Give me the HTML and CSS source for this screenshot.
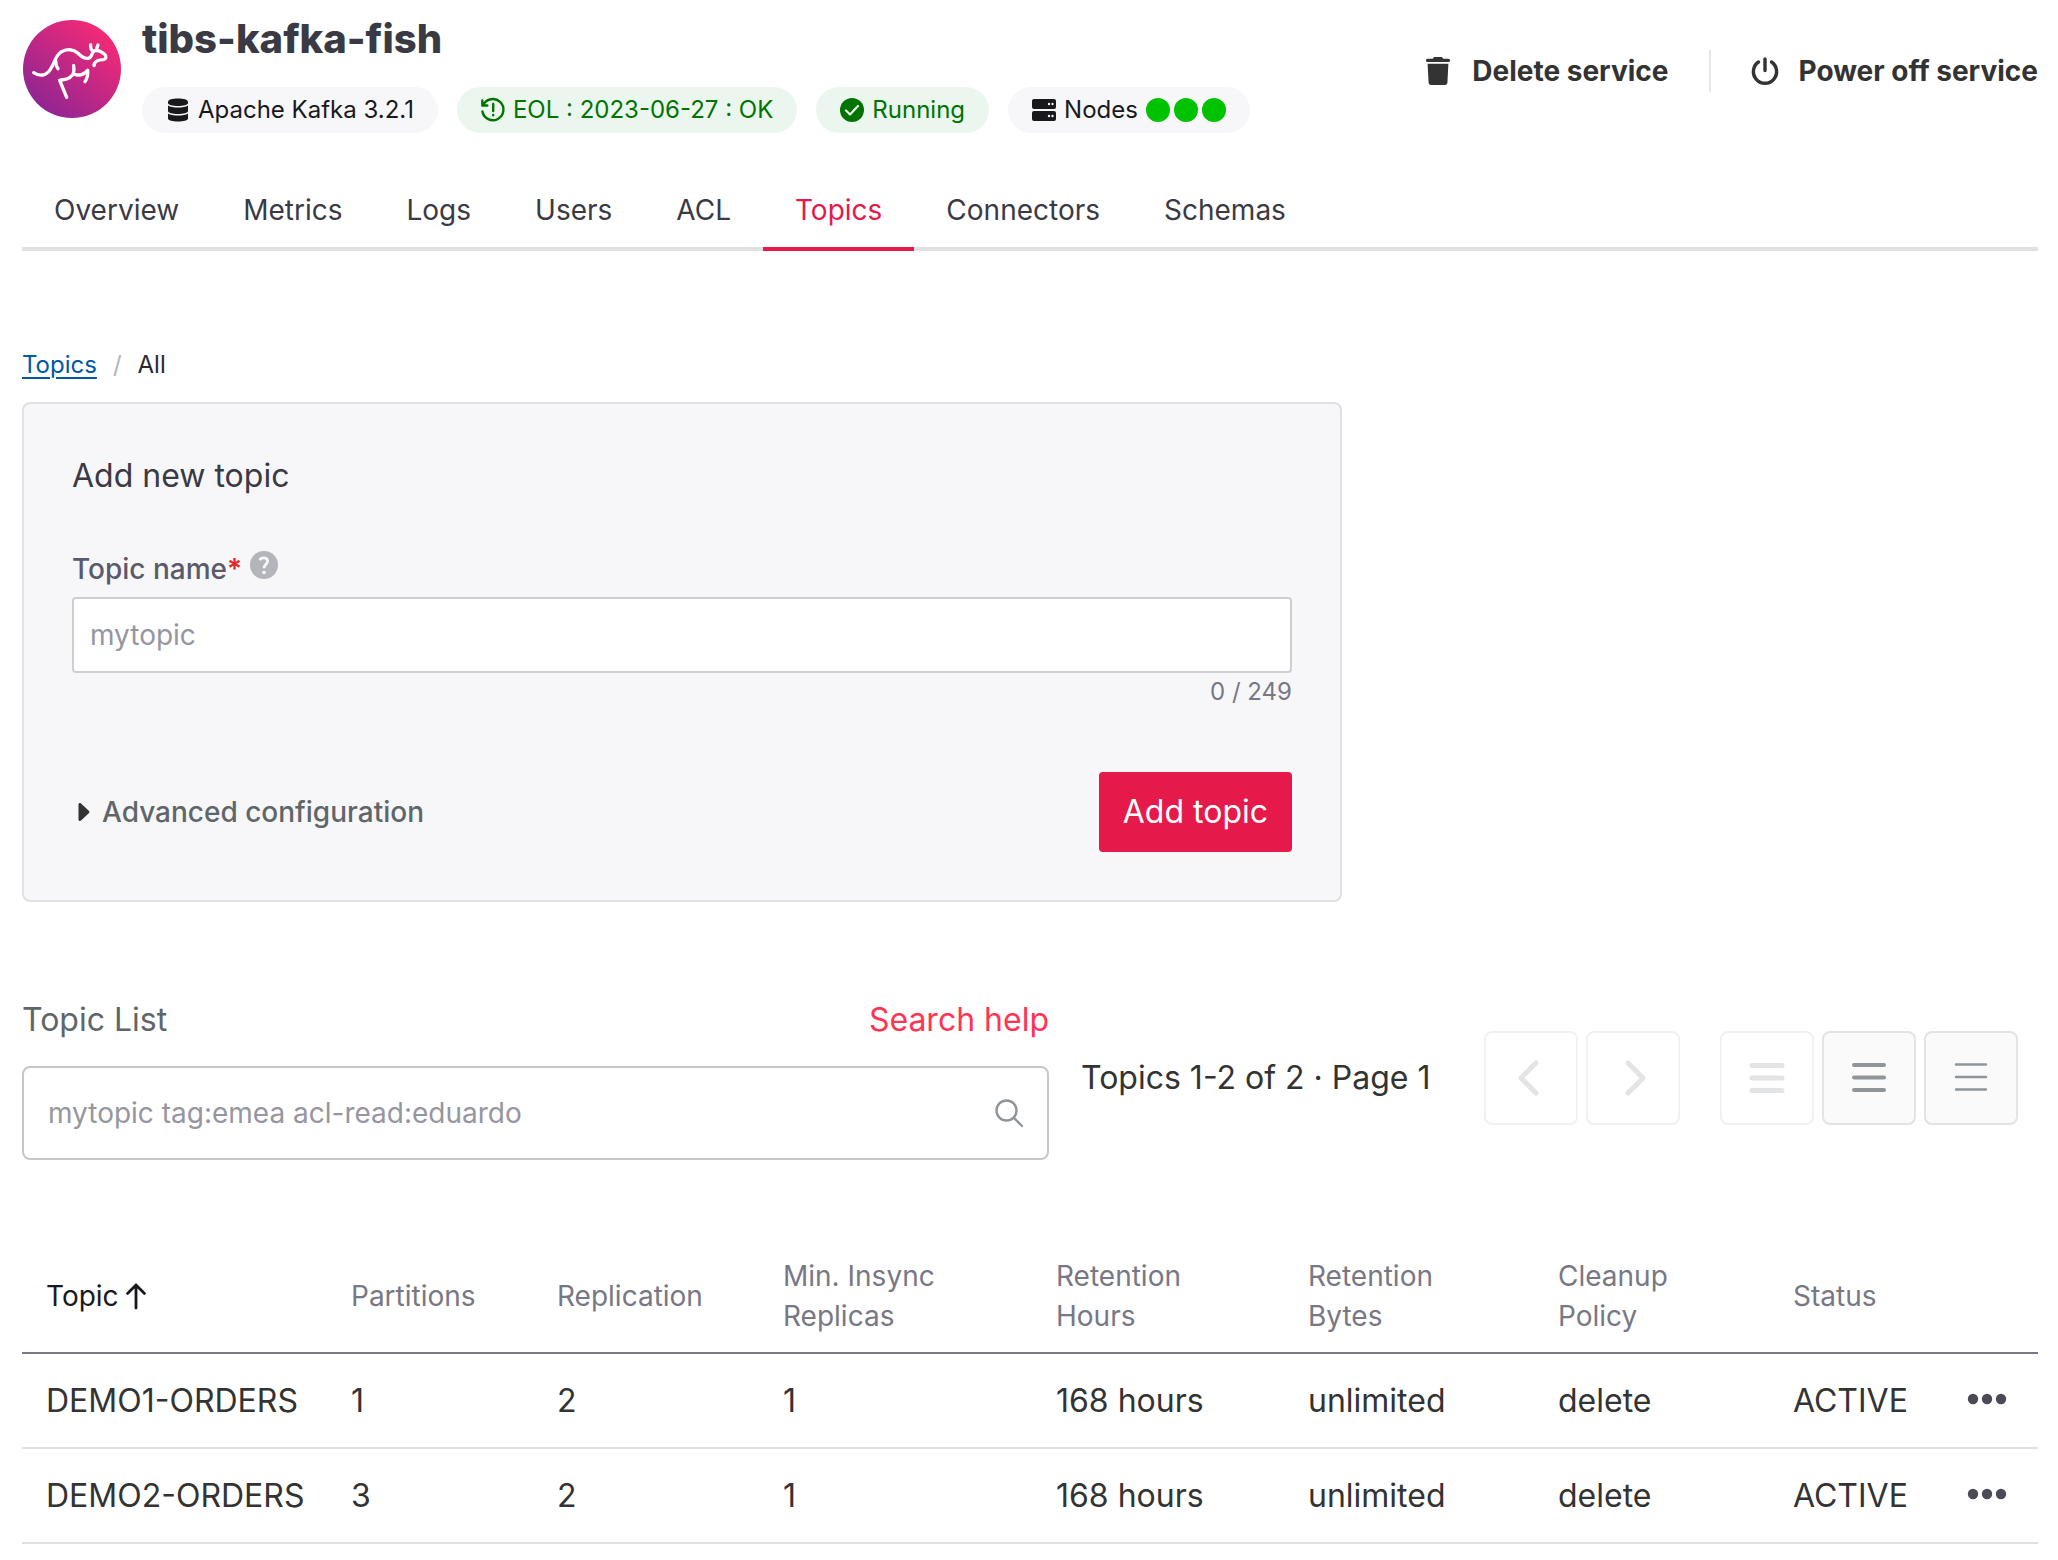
FILE: index.html
```html
<!DOCTYPE html>
<html lang="en">
<head>
<meta charset="utf-8">
<meta name="viewport" content="width=device-width, initial-scale=1">
<title>tibs-kafka-fish – Topics</title>
<link rel="stylesheet" href="styles.css">
</head>
<body>
<header class="service">
  <svg class="service-logo" viewBox="0 0 294 294" aria-hidden="true">
    <defs><linearGradient id="logo-fill" x1="0.15" y1="0.9" x2="0.85" y2="0.1"><stop offset="0" stop-color="#8e2593"/><stop offset="1" stop-color="#f62a75"/></linearGradient></defs>
    <circle cx="147" cy="147" r="147" fill="url(#logo-fill)"/>
    <g fill="none" stroke="#fff" stroke-width="10" stroke-linecap="round" stroke-linejoin="round">
      <path d="M32 158C50 170 69 168 82 148C96 128 95 110 114 96C132 85 152 88 164 99C176 111 185 117 196 115C209 112 204 100 213 93C228 87 236 97 245 103C252 109 249 118 241 119C228 119 214 124 213 137"/>
      <path d="M203 75C202 83 204 90 211 94M225 75C223 81 220 85 221 90"/>
      <path d="M98 122C98 132 100 139 105 146"/>
      <path d="M152 137C155 158 151 165 140 173C129 181 120 178 110 181L131 232"/>
      <path d="M152 162C166 168 182 164 194 151C195 164 193 175 186 185"/>
    </g>
  </svg>
  <div class="service-info">
    <h1 class="service-name">tibs-kafka-fish</h1>
    <ul class="chips">
      <li class="chip">
        <svg class="chip-icon" viewBox="0 0 20 24" fill="currentColor" aria-hidden="true"><path d="M0 4C0 1.600 4.500.5 10 .5S20 1.600 20 4V5C20 7 15.500 8 10 8S0 7 0 5Z"/><path d="M0 7.500C2 9 6 9.600 10 9.600S18 9 20 7.500V13C20 15 15.500 16 10 16S0 15 0 13Z"/><path d="M0 15.500C2 17 6 17.600 10 17.600S18 17 20 15.500V20.500C20 22.500 15.500 23.500 10 23.500S0 22.500 0 20.500Z"/></svg>
        Apache Kafka 3.2.1
      </li>
      <li class="chip chip-ok">
        <svg class="chip-icon" viewBox="0 0 24 24" fill="none" stroke="currentColor" stroke-width="2.400" stroke-linecap="round" stroke-linejoin="round" aria-hidden="true"><path d="M1.300 2.500V7.500H6.300M2.200 7.200A10.600 10.600 0 1 1 1.400 13.500"/><path d="M12.200 6V13M12.200 17V17.200"/></svg>
        EOL : 2023-06-27 : OK
      </li>
      <li class="chip chip-ok">
        <svg class="chip-icon" viewBox="0 0 24 24" aria-hidden="true"><circle cx="12" cy="12" r="12" fill="currentColor"/><path d="M6 12.500L10 16.500L18 8" fill="none" stroke="#ebf7ee" stroke-width="2.200" stroke-linecap="round" stroke-linejoin="round"/></svg>
        Running
      </li>
      <li class="chip">
        <svg class="chip-icon" viewBox="0 0 24 24" aria-hidden="true"><rect y="1" width="24" height="10" rx="2" fill="currentColor"/><rect y="13" width="24" height="10" rx="2" fill="currentColor"/><g fill="#f7f7fa"><circle cx="17" cy="6" r="1.200"/><circle cx="20.500" cy="6" r="1.200"/><circle cx="17" cy="18" r="1.200"/><circle cx="20.500" cy="18" r="1.200"/></g></svg>
        Nodes
        <span class="nodes"><span class="node"></span><span class="node"></span><span class="node"></span></span>
      </li>
    </ul>
  </div>
  <div class="actions">
    <button class="action" type="button">
      <svg class="action-icon" viewBox="0 0 28 28" fill="currentColor" aria-hidden="true"><path d="M3.500 1.800H8.800C9.300.6 10 0 11 0H17C18 0 18.700.6 19.200 1.800H24.500A1.500 1.500 0 0 1 24.500 5H3.500A1.500 1.500 0 0 1 3.500 1.800Z"/><path d="M3.600 6.800H24.400L23.400 25.500C23.300 27.200 22.200 28 20.800 28H7.200C5.800 28 4.700 27.200 4.600 25.500Z"/></svg>
      Delete service
    </button>
    <button class="action" type="button">
      <svg class="action-icon" viewBox="0 0 28 28" fill="none" stroke="currentColor" stroke-width="3.400" stroke-linecap="round" aria-hidden="true"><path d="M14 2V13.500M7.500 5A11.600 11.600 0 1 0 20.500 5"/></svg>
      Power off service
    </button>
  </div>
</header>

<nav class="tabs" aria-label="Service sections">
  <a class="tab" href="#overview">Overview</a>
  <a class="tab" href="#metrics">Metrics</a>
  <a class="tab" href="#logs">Logs</a>
  <a class="tab" href="#users">Users</a>
  <a class="tab" href="#acl">ACL</a>
  <a class="tab tab-active" href="#topics" aria-current="page">Topics</a>
  <a class="tab" href="#connectors">Connectors</a>
  <a class="tab" href="#schemas">Schemas</a>
</nav>

<main>
  <nav class="crumbs" aria-label="Breadcrumb">
    <a class="crumb-link" href="#topics">Topics</a>
    <span class="crumb-sep">/</span>
    <span>All</span>
  </nav>

  <form class="card">
    <h2 class="card-title">Add new topic</h2>
    <div class="field-head">
      <label class="field-label" for="topic-name">Topic name<span class="required">*</span></label>
      <svg class="help" viewBox="0 0 28 28" aria-hidden="true"><circle cx="14" cy="14" r="14" fill="#b4b4bb"/><path d="M9.800 9.200C11 6.200 17.600 5.800 17.600 10.300C17.600 13.200 14 13.400 14 17.200" fill="none" stroke="#f7f7fa" stroke-width="2.800"/><rect x="12.400" y="19.800" width="3.200" height="3.200" fill="#f7f7fa"/></svg>
    </div>
    <input class="field-input" id="topic-name" type="text" placeholder="mytopic">
    <p class="counter">0 / 249</p>
    <div class="card-foot">
      <button class="advanced" type="button" aria-expanded="false">
        <svg class="caret" viewBox="0 0 12 20" fill="#333" aria-hidden="true"><path d="M.5 2.500C.5 1 2 .6 3 1.500L10.800 8.800C11.600 9.500 11.600 10.500 10.800 11.200L3 18.500C2 19.400.5 19 .5 17.500Z"/></svg>
        Advanced configuration
      </button>
      <button class="submit" type="submit">Add topic</button>
    </div>
  </form>

  <section class="toolbar">
    <div class="search">
      <div class="search-head">
        <label for="topic-search">Topic List</label>
        <a class="search-help" href="#search-help">Search help</a>
      </div>
      <div class="search-box">
        <input class="search-input" id="topic-search" type="text" placeholder="mytopic tag:emea acl-read:eduardo">
        <svg class="search-icon" viewBox="0 0 28 28" fill="none" stroke="#8f9598" stroke-width="2.400" stroke-linecap="round" aria-hidden="true"><circle cx="11.500" cy="11.500" r="10"/><path d="M19 19L27 27"/></svg>
      </div>
    </div>
    <p class="page-status">Topics 1-2 of 2 · Page 1</p>
    <div class="pager">
      <div class="button-group">
        <button class="icon-button" type="button" disabled aria-label="Previous page"><svg class="button-icon" viewBox="0 0 40 40" fill="none" stroke="#e3e4e5" stroke-width="5" stroke-linecap="round" stroke-linejoin="round"><path d="M25 5L10 20L25 35"/></svg></button>
        <button class="icon-button" type="button" disabled aria-label="Next page"><svg class="button-icon" viewBox="0 0 40 40" fill="none" stroke="#e3e4e5" stroke-width="5" stroke-linecap="round" stroke-linejoin="round"><path d="M15 5L30 20L15 35"/></svg></button>
      </div>
      <div class="button-group">
        <button class="icon-button" type="button" disabled aria-label="Compact rows"><svg class="button-icon" viewBox="0 0 40 40" fill="none" stroke="#e3e4e5" stroke-width="5" stroke-linecap="round"><path d="M5 7.500H35M5 20H35M5 32.500H35"/></svg></button>
        <button class="icon-button" type="button" aria-label="Normal rows"><svg class="button-icon" viewBox="0 0 40 40" fill="none" stroke="#8f9598" stroke-width="4" stroke-linecap="round"><path d="M5 7H35M5 19.500H35M5 32H35"/></svg></button>
        <button class="icon-button" type="button" aria-label="Spacious rows"><svg class="button-icon" viewBox="0 0 40 40" fill="none" stroke="#8f9598" stroke-width="2.400" stroke-linecap="round"><path d="M5 6.500H35M5 19H35M5 31.500H35"/></svg></button>
      </div>
    </div>
  </section>

  <table class="topics">
    <colgroup>
      <col class="col-topic"><col class="col-partitions"><col class="col-replication"><col class="col-insync"><col class="col-hours"><col class="col-bytes"><col class="col-cleanup"><col class="col-status"><col class="col-menu">
    </colgroup>
    <thead>
      <tr>
        <th scope="col" class="sorted" aria-sort="ascending">Topic <svg class="sort-icon" viewBox="0 0 20 26" fill="none" stroke="currentColor" stroke-width="2.800" stroke-linecap="round" stroke-linejoin="round" aria-hidden="true"><path d="M10 25V2M1.500 10.500L10 2L18.500 10.500"/></svg></th>
        <th scope="col">Partitions</th>
        <th scope="col">Replication</th>
        <th scope="col">Min. Insync<br>Replicas</th>
        <th scope="col">Retention<br>Hours</th>
        <th scope="col">Retention<br>Bytes</th>
        <th scope="col">Cleanup<br>Policy</th>
        <th scope="col">Status</th>
        <td></td>
      </tr>
    </thead>
    <tbody>
      <tr>
        <td>DEMO1-ORDERS</td><td>1</td><td>2</td><td>1</td><td>168 hours</td><td>unlimited</td><td>delete</td><td>ACTIVE</td>
        <td><button class="menu" type="button" aria-label="Actions for DEMO1-ORDERS"><svg class="menu-icon" viewBox="0 0 40 12" fill="#4a4b57"><circle cx="5" cy="6" r="5.200"/><circle cx="19" cy="6" r="5.200"/><circle cx="33" cy="6" r="5.200"/></svg></button></td>
      </tr>
      <tr>
        <td>DEMO2-ORDERS</td><td>3</td><td>2</td><td>1</td><td>168 hours</td><td>unlimited</td><td>delete</td><td>ACTIVE</td>
        <td><button class="menu" type="button" aria-label="Actions for DEMO2-ORDERS"><svg class="menu-icon" viewBox="0 0 40 12" fill="#4a4b57"><circle cx="5" cy="6" r="5.200"/><circle cx="19" cy="6" r="5.200"/><circle cx="33" cy="6" r="5.200"/></svg></button></td>
      </tr>
    </tbody>
  </table>
</main>
</body>
</html>
```
FILE: styles.css
```css
* {
  box-sizing: border-box;
}

body {
  margin: 0;
  padding: 20px 20px 16px 22px;
  background: #fff;
  color: #333;
  font-family: Inter, "Liberation Sans", sans-serif;
  font-size: 32px;
  line-height: 48px;
  font-optical-sizing: none;
}

h1, h2, p, ul {
  margin: 0;
  padding: 0;
}

button, input {
  font: inherit;
  font-optical-sizing: none;
}

button {
  cursor: pointer;
}

svg {
  display: block;
  flex: none;
  overflow: visible;
}

/* Service header */
.service {
  display: flex;
  align-items: flex-start;
}

.service-logo {
  width: 98px;
  height: 98px;
  margin: 0 21px 0 1px;
}

.service-name {
  color: #3a3a44;
  font-size: 40px;
  font-weight: 800;
  line-height: 38px;
}

.chips {
  display: flex;
  flex-wrap: wrap;
  gap: 19px;
  margin-top: 29px;
  list-style: none;
}

.chip {
  display: flex;
  align-items: center;
  gap: 8px;
  padding: 5px 24px;
  border-radius: 23px;
  background: #f7f7fa;
  color: #19191d;
  font-size: 24px;
  line-height: 36px;
}

.chip-ok {
  background: #ebf7ee;
  color: #007300;
}

.chip-icon {
  width: 24px;
  height: 24px;
}

.nodes {
  display: flex;
  gap: 4px;
}

.node {
  width: 24px;
  height: 24px;
  border-radius: 50%;
  background: #00c300;
}

.actions {
  display: flex;
  margin: 30px 0 0 auto;
}

.action {
  display: flex;
  align-items: center;
  gap: 20px;
  padding: 0 0 0 40px;
  border: 0;
  background: none;
  color: #333;
  font-size: 28px;
  font-weight: 700;
  line-height: 42px;
  white-space: nowrap;
}

.action + .action {
  margin-left: 40px;
  border-left: 2px solid #e6e6e8;
}

.action-icon {
  width: 28px;
  height: 28px;
}

/* Tabs */
.tabs {
  display: flex;
  margin-top: 40px;
  box-shadow: inset 0 -4px #e1e1e3;
}

.tab {
  padding: 17px 32px;
  border-bottom: 4px solid transparent;
  color: #3a3a44;
  font-size: 28px;
  line-height: 40px;
  text-decoration: none;
}

.tab-active {
  border-color: #e6194b;
  color: #e6194b;
}

/* Breadcrumb */
.crumbs {
  display: flex;
  gap: 16px;
  margin: 96px 0 19px;
  color: #292930;
  font-size: 24px;
  line-height: 36px;
}

.crumb-link {
  color: #0058a3;
  text-underline-offset: 4px;
  text-decoration-thickness: 2px;
}

.crumb-sep {
  color: #b4b4bb;
}

/* New topic form */
.card {
  max-width: 1320px;
  padding: 48px;
  border: 2px solid #e1e1e3;
  border-radius: 8px;
  background: #f7f7fa;
}

.card-title {
  color: #3a3a44;
  font-size: 32px;
  font-weight: 400;
}

.field-head {
  display: flex;
  align-items: flex-start;
  gap: 8px;
  margin: 49px 0 8px;
}

.field-label {
  color: #5a5b6a;
  font-size: 28px;
  font-weight: 500;
  line-height: 40px;
}

.required {
  color: #e62728;
  font-weight: 600;
}

.help {
  width: 28px;
  height: 28px;
  margin-top: 2px;
}

.field-input {
  display: block;
  width: 100%;
  height: 76px;
  padding: 0 16px;
  border: 2px solid #cfcfd3;
  border-radius: 4px;
  background: #fff;
  color: #333;
  font-size: 28px;
}

::placeholder {
  color: #9696a0;
  opacity: 1;
}

.counter {
  color: #787885;
  font-size: 24px;
  line-height: 38px;
  text-align: right;
}

.card-foot {
  display: flex;
  align-items: center;
  justify-content: space-between;
  margin-top: 61px;
}

.advanced {
  display: flex;
  align-items: center;
  gap: 12px;
  padding: 0 0 0 6px;
  border: 0;
  background: none;
  color: #5f6669;
  font-size: 28px;
  font-weight: 500;
}

.caret {
  width: 12px;
  height: 20px;
}

.submit {
  padding: 16px 24px;
  border: 0;
  border-radius: 4px;
  background: #e6194b;
  color: #fff;
}

/* Search and paging */
.toolbar {
  display: flex;
  align-items: center;
  margin: 94px 0 96px;
  padding-right: 20px;
}

.search {
  flex: 0 1 1027px;
  min-width: 0;
}

.search-head {
  display: flex;
  justify-content: space-between;
  margin-bottom: 22px;
  color: #5f6669;
}

.search-help {
  color: #ff3554;
  text-decoration: none;
}

.search-box {
  display: flex;
  align-items: center;
  height: 94px;
  padding: 0 24px;
  border: 2px solid #c4c8cc;
  border-radius: 8px;
}

.search-input {
  flex: 1;
  min-width: 0;
  padding: 0;
  border: 0;
  outline: 0;
  background: none;
  color: #333;
  font-size: 28px;
}

.search-icon {
  width: 28px;
  height: 28px;
}

.page-status {
  margin-left: 32px;
  white-space: nowrap;
}

.pager {
  display: flex;
  gap: 40px;
  margin-left: auto;
}

.button-group {
  display: flex;
  gap: 8px;
}

.icon-button {
  display: flex;
  align-items: center;
  justify-content: center;
  width: 94px;
  height: 94px;
  padding: 0;
  border: 2px solid #e2e3e4;
  border-radius: 8px;
  background: #fafafa;
}

.icon-button:disabled {
  border-color: #f1f1f2;
  background: #fff;
  cursor: default;
}

.button-icon {
  width: 40px;
  height: 40px;
}

/* Topic table: column widths are shares of the full width */
.topics {
  width: 100%;
  border-collapse: separate;
  border-spacing: 0;
  table-layout: fixed;
}

.col-topic { width: 305px; }
.col-partitions { width: 206px; }
.col-replication { width: 226px; }
.col-insync { width: 273px; }
.col-hours { width: 252px; }
.col-bytes { width: 250px; }
.col-cleanup { width: 235px; }
.col-status { width: 175px; }
.col-menu { width: 94px; }

.topics th {
  padding: 0 0 16px 24px;
  border-bottom: 2px solid #787885;
  color: #787885;
  font-size: 28px;
  font-weight: 400;
  line-height: 40px;
  text-align: left;
}

.topics td {
  height: 95px;
  padding: 0 0 0 24px;
  border-bottom: 2px solid #e1e1e3;
  white-space: nowrap;
}

.topics thead td {
  border-color: #787885;
}

.topics .sorted {
  color: #19191d;
}

.sort-icon {
  display: inline-block;
  width: 20px;
  height: 26px;
  vertical-align: -3px;
}

.menu {
  display: block;
  padding: 0 0 4px;
  border: 0;
  background: none;
}

.menu-icon {
  width: 40px;
  height: 12px;
}
```
